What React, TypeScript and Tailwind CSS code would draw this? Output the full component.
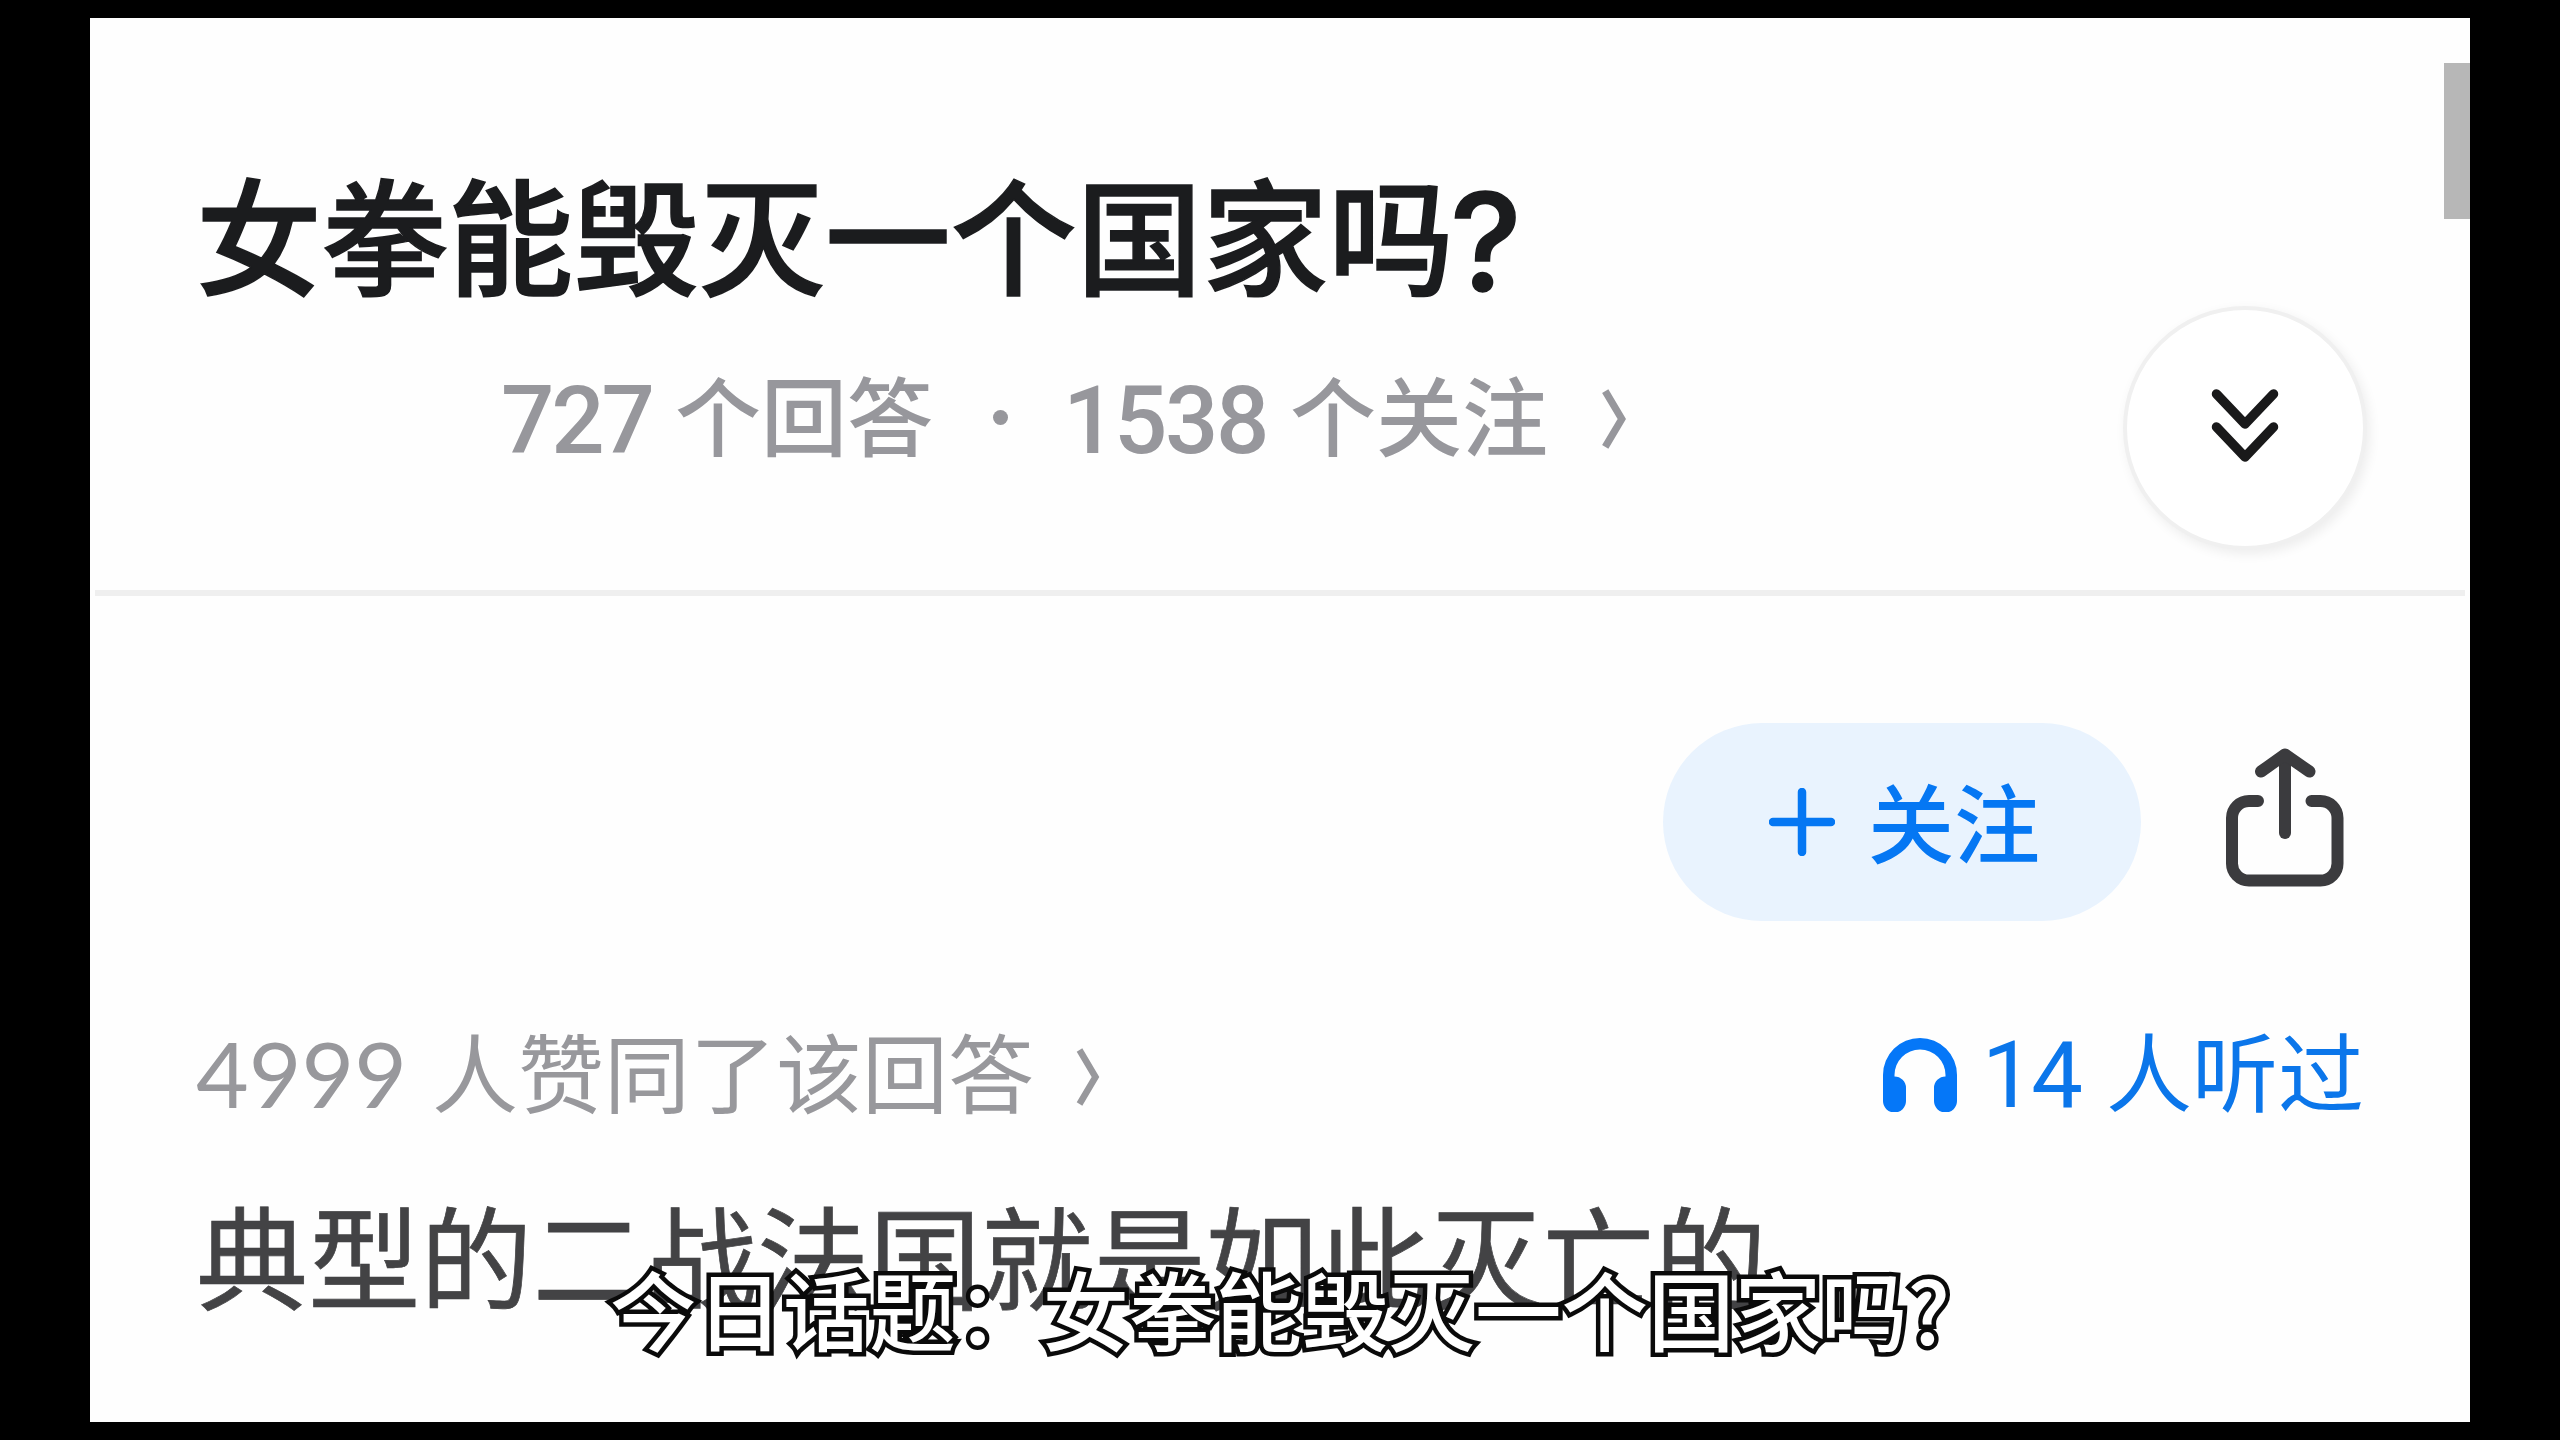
import type { ReactNode } from "react";

const CJK = "font-['Noto_Sans_CJK_SC',sans-serif]";

function ChevronRight({ className, strokeWidth }: { className: string; strokeWidth: number }) {
  return (
    <svg viewBox="0 0 24 60" fill="none" className={className}>
      <path d="M4 3 L20 30 L4 57" stroke="currentColor" strokeWidth={strokeWidth} />
    </svg>
  );
}

function DoubleChevronDown() {
  return (
    <svg width="68" height="76" viewBox="0 0 68 76" fill="none" className="text-[#19191a]">
      <g stroke="currentColor" strokeWidth="9.5" strokeLinecap="round" strokeLinejoin="round">
        <path d="M5.5 6 L34 36 L62.5 6" />
        <path d="M5.5 39 L34 69 L62.5 39" />
      </g>
    </svg>
  );
}

function ShareIcon() {
  return (
    <svg width="119" height="140" viewBox="0 0 119 140" fill="none" className="mb-[8px] text-[#3b3b3e]">
      <g stroke="currentColor" strokeWidth="12" strokeLinecap="round" strokeLinejoin="round">
        <path d="M33 53 H24 A17 17 0 0 0 7 70 V115 A17 17 0 0 0 24 132.5 H95.5 A17 17 0 0 0 112.5 115 V70 A17 17 0 0 0 95.5 53 H86.5" />
        <path d="M60 7 V85" />
        <path d="M36 23.5 L60 6.5 L84.5 23.5" />
      </g>
    </svg>
  );
}

function HeadphonesIcon() {
  return (
    <svg width="74" height="74" viewBox="0 0 74 74" className="text-[#0577f8]">
      <path
        fill="currentColor"
        d="M0 37 A37 37 0 0 1 74 37 V63 A11.5 11.5 0 0 1 51 63 V50 A11.5 11.5 0 0 1 62.5 38.5 V37 A25.5 25.5 0 0 0 11.5 37 V38.5 A11.5 11.5 0 0 1 23 50 V63 A11.5 11.5 0 0 1 0 63 Z"
      />
    </svg>
  );
}

function Label({ children, className = "" }: { children: ReactNode; className?: string }) {
  return <span className={`whitespace-nowrap text-[86px] leading-none ${className}`}>{children}</span>;
}

function QuestionHeader() {
  return (
    <header className="flex h-[572px] shrink-0 justify-between pl-[106px] pr-[103px]">
      <div className="pt-[151px]">
        <h1 className="flex h-[126px] items-baseline whitespace-nowrap text-[125.8px] font-medium leading-none text-[#1b1c1e] [-webkit-text-stroke:1.5px_#1b1c1e]">
          <span>女拳能毁灭一个国家吗</span>
          <span className="-ml-[4px] translate-y-[5px] font-[Inter,sans-serif] text-[136px] leading-[120px]">?</span>
        </h1>
        <div className="mt-[75px] flex h-[86px] items-baseline pl-[303px] text-[#97979c]">
          <span className="ml-[2px] w-[148px] translate-y-[3px] font-[Roboto,sans-serif] text-[94px] font-medium leading-none tracking-[-3.2px]">
            727
          </span>
          <Label className="ml-[26px] font-medium">个回答</Label>
          <span className="ml-[60px] size-[15px] -translate-y-[25px] rounded-full bg-current" />
          <span className="ml-[55px] w-[203px] translate-y-[3px] font-[Roboto,sans-serif] text-[94px] font-medium leading-none tracking-[-2.4px]">
            1538
          </span>
          <Label className="ml-[24px] font-medium">个关注</Label>
          <ChevronRight className="ml-[53px] h-[62px] w-[25px]" strokeWidth={7} />
        </div>
      </div>
      <button className="mt-[288px] flex size-[244px] items-center justify-center rounded-full border-4 border-[#f0f0f0] bg-white pb-[4px] shadow-[3px_4px_12px_rgba(0,0,0,0.07)]">
        <DoubleChevronDown />
      </button>
    </header>
  );
}

function AuthorActions() {
  return (
    <div className="flex items-center justify-end gap-[84px] pr-[126px] pt-[127px]">
      <button className="flex h-[198px] w-[478px] items-center rounded-full bg-[#e9f3fe] pl-[106px] text-[#0577f3]">
        <svg width="66" height="68" viewBox="0 0 66 68" fill="none">
          <path d="M4 34 H62 M33 4 V64" stroke="currentColor" strokeWidth="8.5" strokeLinecap="round" />
        </svg>
        <Label className="-mt-1 ml-[33px] font-medium">关注</Label>
      </button>
      <ShareIcon />
    </div>
  );
}

function AnswerStats() {
  return (
    <div className="mt-[105px] flex h-[86px] justify-between pl-[106px] pr-[106px]">
      <div className="flex items-baseline text-[#98989c]">
        <span className="w-[236px] translate-y-[1px] font-[Lato,sans-serif] text-[91px] leading-none">4999</span>
        <Label>人赞同了该回答</Label>
        <ChevronRight className="ml-[41px] h-[60px] w-[25px]" strokeWidth={6.5} />
      </div>
      <div className="flex items-baseline text-[#0b76ea]">
        <div className="translate-y-[6px]">
          <HeadphonesIcon />
        </div>
        <span className="ml-[25px] w-[124px] translate-y-[1px] font-[Roboto,sans-serif] text-[92px] leading-none tracking-[-2.5px]">
          14
        </span>
        <Label>人听过</Label>
      </div>
    </div>
  );
}

export default function App() {
  return (
    <div className={`relative h-[1440px] w-[2560px] overflow-hidden bg-black px-[90px] py-[18px] ${CJK}`} lang="zh-CN">
      <main className="relative flex h-[1404px] flex-col bg-[#fefefe]">
        <QuestionHeader />
        <hr className="mx-[5px] h-[6px] shrink-0 border-0 bg-[#efefef]" />
        <AuthorActions />
        <AnswerStats />
        <p className="mt-[85px] whitespace-nowrap pl-[106px] text-[112.2px] leading-none text-[#434345] [-webkit-text-stroke:0.7px_#434345]">
          典型的二战法国就是如此灭亡的
        </p>
        {/* scrollbar thumb */}
        <div className="absolute right-0 top-[45px] h-[156px] w-[26px] bg-[#b7b7b7]" />
      </main>

      {/* caption */}
      <div className="absolute inset-x-0 top-[1265px] flex justify-center">
        <span className="whitespace-nowrap text-[86.5px] font-medium leading-none text-white [-webkit-text-stroke:9px_#0a0a0a] [paint-order:stroke_fill] [stroke-linejoin:round]">
          今日话题：女拳能毁灭一个国家吗?
        </span>
      </div>
    </div>
  );
}
